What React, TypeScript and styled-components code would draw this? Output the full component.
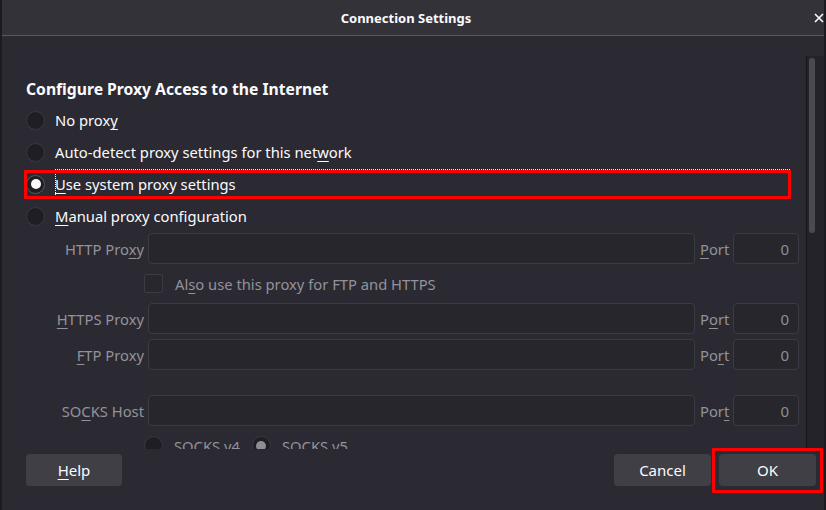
import React from 'react';
import styled, { createGlobalStyle } from 'styled-components';

const GlobalStyle = createGlobalStyle`
    html, body {
        margin: 0;
        padding: 0;
        background: #2b2a33;
    }
    body {
        font-family: "Noto Sans", "DejaVu Sans", sans-serif;
    }
`;

const Window = styled.div`
    width: 826px;
    height: 510px;
    box-sizing: border-box;
    display: flex;
    flex-direction: column;
    background: #2b2a33;
    color: #fbfbfe;
    border-left: 2px solid #1c1b22;
    border-right: 2px solid #1c1b22;
    overflow: hidden;
`;

const TitleBar = styled.header`
    flex: none;
    height: 35px;
    display: grid;
    grid-template-columns: 1fr auto 1fr;
    align-items: center;
    background: #333238;
    border-bottom: 1px solid #5b5a60;
    font-size: 13px;
    font-weight: 700;

    .title {
        grid-column: 2;
        margin-right: 14px;
    }

    .close {
        grid-column: 3;
        justify-self: end;
        margin-right: 0;
        display: flex;
    }
`;

const Body = styled.div`
    flex: 1;
    min-height: 0;
    display: flex;
`;

const Content = styled.div`
    flex: 1;
    min-width: 0;
    padding: 41px 0 0 24px;
    overflow: hidden;
`;

const ScrollTrack = styled.div`
    flex: none;
    width: 15px;
    margin-top: 20px;
    background: #242329;
    border-left: 1px solid #16151a;
    padding: 2px 0 0 2px;

    .thumb {
        width: 6px;
        height: 175px;
        border-radius: 3px;
        background: #4b4a52;
    }
`;

const Heading = styled.h2`
    margin: 0;
    font-size: 15.7px;
    line-height: 24px;
    font-weight: 700;
`;

const RadioList = styled.div`
    margin-top: 3px;
    display: flex;
    flex-direction: column;
`;

const RadioRow = styled.label<{ $marked?: boolean }>`
    position: relative;
    height: 32px;
    display: flex;
    align-items: center;
    gap: 10px;
    font-size: 14.75px;

    &::after {
        content: '';
        display: ${p => (p.$marked ? 'block' : 'none')};
        position: absolute;
        left: -2px;
        right: 15px;
        top: 2px;
        bottom: 1px;
        border: 3px solid #ff0000;
        pointer-events: none;
    }
`;

const RowText = styled.span<{ $focused?: boolean }>`
    flex: ${p => (p.$focused ? 1 : 'none')};
    height: 30px;
    display: flex;
    align-items: center;
    margin-right: ${p => (p.$focused ? '16px' : '0')};
    outline: ${p => (p.$focused ? '1px dotted #fbfbfe' : 'none')};
    outline-offset: -1px;
`;

const Radio = styled.span<{ $checked?: boolean; $disabled?: boolean }>`
    flex: none;
    width: 19px;
    height: 19px;
    box-sizing: border-box;
    border-radius: 50%;
    border: 1px solid ${p => (p.$checked && !p.$disabled ? '#57565f' : '#3a3941')};
    background: #1f1e25;
    display: grid;
    place-items: center;

    &::after {
        content: '';
        display: ${p => (p.$checked ? 'block' : 'none')};
        width: 10px;
        height: 10px;
        border-radius: 50%;
        background: ${p => (p.$disabled ? '#8e8d95' : '#fbfbfe')};
    }
`;

const U = styled.span`
    text-decoration: underline;
    text-underline-offset: 3px;
    text-decoration-thickness: 1px;
`;

const FieldRow = styled.div<{ $top: number }>`
    margin-top: ${p => p.$top}px;
    display: grid;
    grid-template-columns: 122px 547px 38px 66px;
    align-items: center;
    height: 31px;
    font-size: 14.75px;
    color: #93929a;
`;

const FieldLabel = styled.span`
    text-align: right;
    padding-right: 4px;
    white-space: nowrap;
`;

const PortLabel = styled.span`
    padding-left: 5px;
`;

const Field = styled.input`
    box-sizing: border-box;
    width: 100%;
    height: 31px;
    margin: 0;
    padding: 0 9px;
    border: 1px solid #3c3b42;
    border-radius: 4px;
    background: #27262d;
    color: #8e8d95;
    font: inherit;
    font-size: 15px;
    text-align: right;
    outline: none;
`;

const OptionRow = styled.div<{ $top: number }>`
    margin-top: ${p => p.$top}px;
    padding-left: 118px;
    display: flex;
    align-items: center;
    height: 19px;
    font-size: 14.75px;
    color: #93929a;
    white-space: nowrap;
`;

const CheckBox = styled.span`
    flex: none;
    width: 19px;
    height: 19px;
    box-sizing: border-box;
    border: 1px solid #3c3b42;
    border-radius: 2px;
    background: #28272e;
    margin-right: 12px;
`;

const SubRadio = styled.span`
    display: flex;
    align-items: center;
    gap: 11px;
    margin-right: 12px;
`;

const Footer = styled.footer`
    flex: none;
    height: 61px;
    box-sizing: border-box;
    padding: 5px 8px 0 24px;
    display: flex;
    align-items: flex-start;
    gap: 8px;

    .spacer {
        flex: 1;
    }
`;

const Button = styled.button<{ $width?: number }>`
    width: ${p => p.$width ?? 97}px;
    height: 32px;
    border: none;
    border-radius: 4px;
    background: #403f46;
    color: #fbfbfe;
    font-family: "Noto Sans", "DejaVu Sans", sans-serif;
    font-size: 15px;
    padding: 0;
`;

const Marked = styled.div`
    position: relative;

    &::after {
        content: '';
        position: absolute;
        left: -7px;
        right: -7px;
        top: -6px;
        bottom: -7px;
        border: 3px solid #ff0000;
        pointer-events: none;
    }
`;

const CloseIcon = () => (
    <svg width="10" height="10" viewBox="0 0 10 10">
        <path d="M1 1 L9 9 M9 1 L1 9" stroke="#fbfbfe" strokeWidth="1.6" />
    </svg>
);

interface ProxyRowProps {
    top: number;
    label: React.ReactNode;
    port: React.ReactNode;
}

const ProxyRow: React.FC<ProxyRowProps> = ({ top, label, port }) => (
    <FieldRow $top={top}>
        <FieldLabel>{label}</FieldLabel>
        <Field disabled defaultValue="" />
        <PortLabel>{port}</PortLabel>
        <Field disabled defaultValue="0" />
    </FieldRow>
);

const App: React.FC = () => {
    return (
        <>
            <GlobalStyle />
            <Window>
                <TitleBar>
                    <span className="title">Connection Settings</span>
                    <span className="close"><CloseIcon /></span>
                </TitleBar>
                <Body>
                    <Content>
                        <Heading>Configure Proxy Access to the Internet</Heading>
                        <RadioList>
                            <RadioRow>
                                <Radio />
                                <RowText>No prox<U>y</U></RowText>
                            </RadioRow>
                            <RadioRow>
                                <Radio />
                                <RowText>Auto-detect proxy settings for this net<U>w</U>ork</RowText>
                            </RadioRow>
                            <RadioRow $marked>
                                <Radio $checked />
                                <RowText $focused><U>U</U>se system proxy settings</RowText>
                            </RadioRow>
                            <RadioRow>
                                <Radio />
                                <RowText><U>M</U>anual proxy configuration</RowText>
                            </RadioRow>
                        </RadioList>

                        <ProxyRow top={1} label={<>HTTP Pro<U>x</U>y</>} port={<><U>P</U>ort</>} />
                        <OptionRow $top={10}>
                            <CheckBox />
                            <span>Al<U>s</U>o use this proxy for FTP and HTTPS</span>
                        </OptionRow>
                        <ProxyRow top={10} label={<><U>H</U>TTPS Proxy</>} port={<>P<U>o</U>rt</>} />
                        <ProxyRow top={5} label={<><U>F</U>TP Proxy</>} port={<>Po<U>r</U>t</>} />
                        <ProxyRow top={25} label={<>SO<U>C</U>KS Host</>} port={<>Por<U>t</U></>} />
                        <OptionRow $top={10}>
                            <SubRadio><Radio $disabled />SOCKS v4</SubRadio>
                            <SubRadio><Radio $checked $disabled />SOCKS v5</SubRadio>
                        </OptionRow>
                    </Content>
                    <ScrollTrack>
                        <div className="thumb" />
                    </ScrollTrack>
                </Body>
                <Footer>
                    <Button $width={96}><U>H</U>elp</Button>
                    <div className="spacer" />
                    <Button>Cancel</Button>
                    <Marked>
                        <Button>OK</Button>
                    </Marked>
                </Footer>
            </Window>
        </>
    );
};

export default App;
